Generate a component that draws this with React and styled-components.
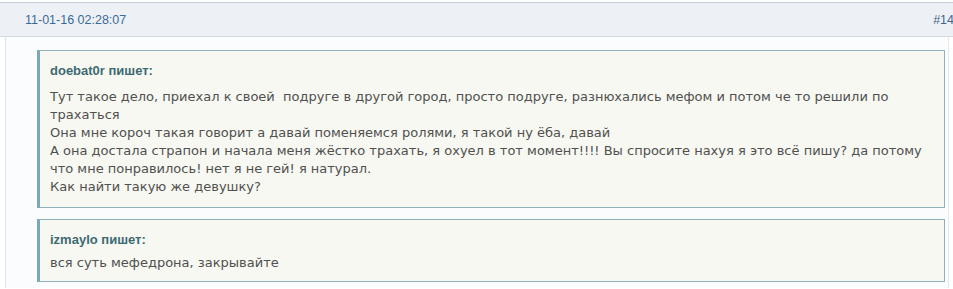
import React from "react";
import styled, { createGlobalStyle } from "styled-components";

const Global = createGlobalStyle`
  html, body { margin: 0; padding: 0; background: #ffffff; overflow: hidden; }
  #root { width: 953px; }
`;

const Post = styled.div`
  width: 954px;
  padding-top: 2px;
`;

const Header = styled.div`
  box-sizing: border-box;
  height: 35px;
  display: flex;
  align-items: center;
  justify-content: space-between;
  padding: 0 0 0 25px;
  background: #edf1f5;
  border-top: 1px solid #c6cdd4;
  border-bottom: 1px solid #d3d9df;
  font-family: "Liberation Sans", Arial, sans-serif;
  font-size: 12.5px;
  color: #3a6a9a;
`;

const Num = styled.span`
  color: #3f6590;
`;

const Body = styled.div`
  box-sizing: border-box;
  margin-left: 5px;
  width: 944px;
  padding: 13px 3px 6px 31px;
  background: #fbfcfd;
  border-left: 1px solid #dde3e8;
  border-right: 1px solid #e4e9ed;
  display: flex;
  flex-direction: column;
  gap: 11px;
`;

const Quote = styled.div`
  background: #f7f8f1;
  border: 1px solid #8fb1b9;
  border-left: 3px solid #7aa8b6;
  padding: 11px 10px ${(p) => p.$pb}px 10px;
  display: flex;
  flex-direction: column;
  gap: ${(p) => p.$gap}px;
`;

const Author = styled.div`
  font-family: "Liberation Sans", Arial, sans-serif;
  font-weight: bold;
  font-size: 13px;
  line-height: 18px;
  color: #3e6a73;
`;

const Text = styled.div`
  font-family: "DejaVu Sans", Verdana, sans-serif;
  font-size: 13px;
  line-height: 18px;
  color: #505050;
  white-space: pre-wrap;
`;

export default function App() {
  return (
    <>
      <Global />
      <Post>
        <Header>
          <span>11-01-16 02:28:07</span>
          <Num>#14</Num>
        </Header>
        <Body>
          <Quote $gap={8} $pb={11}>
            <Author>doebat0r пишет:</Author>
            <Text>
              {"Тут такое дело, приехал к своей  подруге в другой город, просто подруге, разнюхались мефом и потом че то решили по трахаться\nОна мне короч такая говорит а давай поменяемся ролями, я такой ну ёба, давай\nА она достала страпон и начала меня жёстко трахать, я охуел в тот момент!!!! Вы спросите нахуя я это всё пишу? да потому что мне понравилось! нет я не гей! я натурал.\nКак найти такую же девушку?"}
            </Text>
          </Quote>
          <Quote $gap={5} $pb={9}>
            <Author>izmaylo пишет:</Author>
            <Text>вся суть мефедрона, закрывайте</Text>
          </Quote>
        </Body>
      </Post>
    </>
  );
}
